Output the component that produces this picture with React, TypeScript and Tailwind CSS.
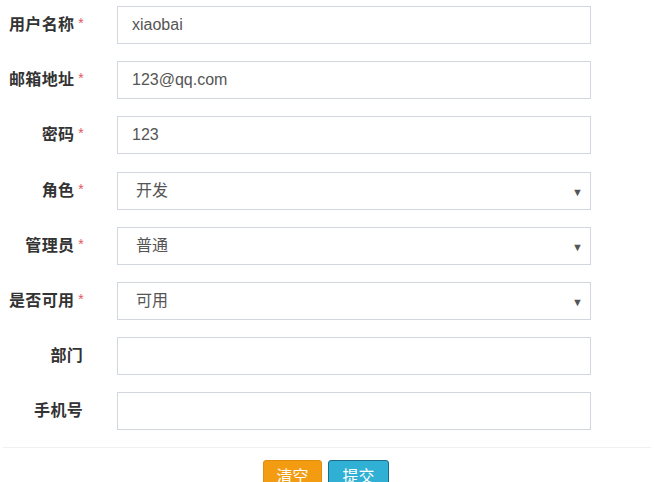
import React from "react";

type Field = {
  label: string;
  required: boolean;
  value: string;
  select?: boolean;
};

const fields: Field[] = [
  { label: "用户名称", required: true, value: "xiaobai" },
  { label: "邮箱地址", required: true, value: "123@qq.com" },
  { label: "密码", required: true, value: "123" },
  { label: "角色", required: true, value: "开发", select: true },
  { label: "管理员", required: true, value: "普通", select: true },
  { label: "是否可用", required: true, value: "可用", select: true },
  { label: "部门", required: false, value: "" },
  { label: "手机号", required: false, value: "" },
];

function FormRow({ field, extra }: { field: Field; extra?: boolean }) {
  return (
    <div className={`flex items-center h-[38px] ${extra ? "mb-[18px]" : "mb-[17px]"}`}>
      <label className="w-[84px] shrink-0 text-right text-[16px] font-bold text-[#333] tracking-[0.3px]">
        {field.label}
        {field.required ? (
          <span className="ml-[4px] text-[#e0565e] font-normal text-[14px] relative -top-[2px]">*</span>
        ) : (
          <span className="inline-block w-[1px]" />
        )}
      </label>
      <div
        className={`ml-[33px] w-[474px] h-[38px] border border-[#d2d6de] bg-white flex items-center justify-between text-[16px] text-[#555] ${
          field.select ? "pl-[18px] pr-[7px]" : "pl-[14px] pr-[12px]"
        }`}
      >
        <span>{field.value}</span>
        {field.select && <span className="text-[11px] text-[#555] relative top-[1px]">▼</span>}
      </div>
    </div>
  );
}

export default function App() {
  return (
    <div
      className="w-[654px] h-[482px] overflow-hidden bg-white pt-[6px]"
      style={{ fontFamily: '"Liberation Sans", "Noto Sans CJK SC", sans-serif' }}
    >
      <form>
        {fields.map((f, i) => (
          <FormRow key={f.label} field={f} extra={i === 2} />
        ))}
        <div className="mx-[3px] border-t border-[#f0f0f0]" />
        <div className="flex justify-center gap-[6px] mt-[12px] ml-[-2px]">
          <button
            type="button"
            className="w-[59px] h-[34px] rounded-[3px] bg-[#f39c12] border border-[#e08e0b] text-white text-[16px]"
          >
            清空
          </button>
          <button
            type="button"
            className="w-[61px] h-[34px] rounded-[3px] bg-[#31b0d5] border border-[#1b6d85] text-white text-[16px]"
          >
            提交
          </button>
        </div>
      </form>
    </div>
  );
}
